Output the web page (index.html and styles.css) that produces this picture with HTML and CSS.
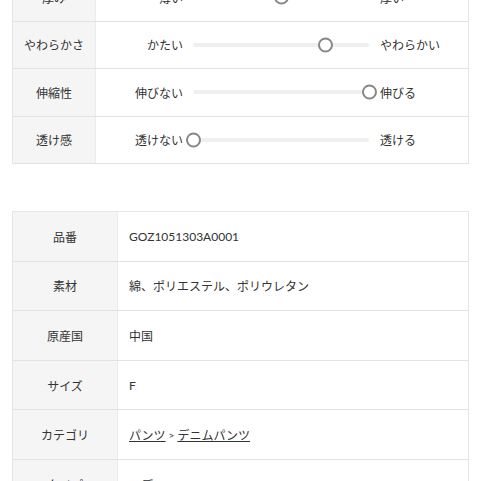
FILE: index.html
```html
<!DOCTYPE html>
<html lang="ja">
<head>
<meta charset="utf-8">
<link rel="stylesheet" href="styles.css">
</head>
<body>
<div class="page">
  <div class="spec feel">
    <div class="row">
      <div class="label">厚み</div>
      <div class="value">
        <div class="scale">
          <span class="lo">薄い</span>
          <span class="track"><span class="knob" style="left:50%"></span></span>
          <span class="hi">厚い</span>
        </div>
      </div>
    </div>
    <div class="row">
      <div class="label">やわらかさ</div>
      <div class="value">
        <div class="scale">
          <span class="lo">かたい</span>
          <span class="track"><span class="knob" style="left:75%"></span></span>
          <span class="hi">やわらかい</span>
        </div>
      </div>
    </div>
    <div class="row">
      <div class="label">伸縮性</div>
      <div class="value">
        <div class="scale">
          <span class="lo">伸びない</span>
          <span class="track"><span class="knob" style="left:100%"></span></span>
          <span class="hi">伸びる</span>
        </div>
      </div>
    </div>
    <div class="row">
      <div class="label">透け感</div>
      <div class="value">
        <div class="scale">
          <span class="lo">透けない</span>
          <span class="track"><span class="knob" style="left:0%"></span></span>
          <span class="hi">透ける</span>
        </div>
      </div>
    </div>
  </div>

  <div class="spec info">
    <div class="row">
      <div class="label">品番</div>
      <div class="value">GOZ1051303A0001</div>
    </div>
    <div class="row">
      <div class="label">素材</div>
      <div class="value">綿、ポリエステル、ポリウレタン</div>
    </div>
    <div class="row">
      <div class="label">原産国</div>
      <div class="value">中国</div>
    </div>
    <div class="row">
      <div class="label">サイズ</div>
      <div class="value">F</div>
    </div>
    <div class="row">
      <div class="label">カテゴリ</div>
      <div class="value"><a href="#">パンツ</a><span class="sep">&gt;</span><a href="#">デニムパンツ</a></div>
    </div>
    <div class="row">
      <div class="label">タイプ</div>
      <div class="value">レディース</div>
    </div>
  </div>
</div>
</body>
</html>
```

FILE: styles.css
```css
* { box-sizing: border-box; }
html, body { margin: 0; padding: 0; background: #fff; }
body {
  font-family: Lato, "Noto Sans CJK JP", sans-serif;
  font-size: 12px;
  color: #333;
  overflow: hidden;
}
.page {
  padding: 0 12px;
}
.spec {
  border: 1px solid #e6e6e6;
  border-bottom: none;
}
.feel { margin-top: -27px; }
.info { margin-top: 47px; }
.row {
  display: flex;
  border-bottom: 1px solid #e2e2e2;
}
.feel .row { height: 47.5px; }
.info .row { height: 49.6px; }
.label {
  background: #f5f5f5;
  border-right: 1px solid #ececec;
  display: flex;
  align-items: center;
  justify-content: center;
  flex: none;
}
.feel .label { width: 83px; }
.info .label { width: 105px; }
.value {
  flex: 1;
  display: flex;
  align-items: center;
}
.info .value { padding-left: 11px; }
.feel .value { padding-left: 27px; }
.scale {
  display: flex;
  align-items: center;
}
.lo {
  width: 60px;
  text-align: right;
  margin-right: 10px;
}
.hi {
  width: 60px;
  margin-left: 11px;
}
.track {
  position: relative;
  width: 176px;
  height: 4px;
  background: #efefef;
  border-radius: 2px;
}
.knob {
  position: absolute;
  top: 50%;
  width: 15px;
  height: 15px;
  margin-left: -7.5px;
  transform: translateY(-50%);
  border: 2px solid #878787;
  border-radius: 50%;
  background: #fff;
}
a {
  color: #333;
  text-decoration: underline;
}
.sep {
  font-size: 10px;
  margin: 0 3px;
}
```
